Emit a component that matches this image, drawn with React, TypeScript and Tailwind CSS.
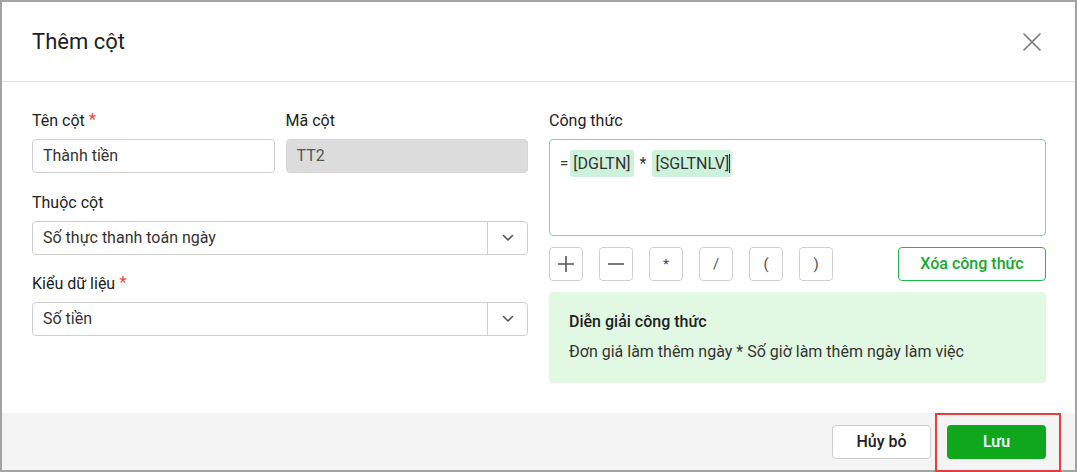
import React from 'react';

const font = { fontFamily: 'Roboto, "Noto Sans", Arial, sans-serif' };

function Label({ text, required }: { text: string; required?: boolean }) {
    return (
        <div className="h-5 leading-5 text-[16px] text-[#212121] mb-2 flex items-start">
            <span>{text}</span>
            {required && <span className="text-[#ef4444] ml-1 text-[17px] leading-4">*</span>}
        </div>
    );
}

function Chevron() {
    return (
        <svg width="12" height="8" viewBox="0 0 12 8" fill="none">
            <path d="M1.5 1.5L6 6L10.5 1.5" stroke="#555" strokeWidth="1.6" strokeLinecap="round" strokeLinejoin="round" />
        </svg>
    );
}

function Select({ value }: { value: string }) {
    return (
        <div className="h-[34px] flex border border-[#cfcfcf] rounded-[4px] bg-white">
            <div className="flex-1 flex items-center pl-[10px] text-[16px] text-[#333]">{value}</div>
            <div className="w-10 border-l border-[#cfcfcf] flex items-center justify-center">
                <Chevron />
            </div>
        </div>
    );
}

function OpButton({ children }: { children: React.ReactNode }) {
    return (
        <button className="w-[34px] h-[34px] border border-[#cfcfcf] rounded-[4px] bg-white flex items-center justify-center text-[#555] text-[15px]">
            {children}
        </button>
    );
}

export default function App() {
    return (
        <div style={font} className="relative w-[1077px] h-[472px] border-2 border-[#a3a3a3] bg-white flex flex-col">
            {/* header */}
            <div className="h-[80px] shrink-0 flex items-center justify-between pl-[30px] pr-[33px] border-b border-[#e0e0e0]">
                <h1 className="text-[22px] text-[#212121] font-normal">Thêm cột</h1>
                <svg width="20" height="20" viewBox="0 0 20 20" fill="none">
                    <path d="M2 2L18 18M18 2L2 18" stroke="#757575" strokeWidth="1.6" strokeLinecap="round" />
                </svg>
            </div>

            {/* body */}
            <div className="flex-1 grid grid-cols-[496px_497px] gap-[21px] pl-[30px] pt-[29px]">
                <div className="flex flex-col">
                    <div className="grid grid-cols-2 gap-[11px]">
                        <div>
                            <Label text="Tên cột" required />
                            <div className="h-[34px] border border-[#cfcfcf] rounded-[4px] flex items-center pl-[10px] text-[16px] text-[#333]">
                                Thành tiền
                            </div>
                        </div>
                        <div>
                            <Label text="Mã cột" />
                            <div className="h-[34px] border border-[#d6d6d6] bg-[#dcdcdc] rounded-[4px] flex items-center pl-[10px] text-[16px] text-[#555]">
                                TT2
                            </div>
                        </div>
                    </div>
                    <div className="mt-5">
                        <Label text="Thuộc cột" />
                        <Select value="Số thực thanh toán ngày" />
                    </div>
                    <div className="mt-[19px]">
                        <Label text="Kiểu dữ liệu" required />
                        <Select value="Số tiền" />
                    </div>
                </div>

                <div className="flex flex-col">
                    <Label text="Công thức" />
                    <div className="h-[97px] border border-[#7ad7a0] rounded-[4px] px-[10px] pt-[10px]">
                        <div className="flex items-center text-[16px] text-[#333]">
                            <span className="mr-[2px] text-[15px]">=</span>
                            <span className="bg-[#ccf2dc] rounded-[3px] px-[3px] h-[27px] leading-[27px]">[DGLTN]</span>
                            <span className="mx-[6px]">*</span>
                            <span className="bg-[#ccf2dc] rounded-[3px] pl-[3px] pr-[2px] h-[27px] leading-[27px] flex items-center">
                                [SGLTNLV]<span className="w-px h-[19px] bg-[#222]" />
                            </span>
                        </div>
                    </div>

                    <div className="mt-[11px] flex items-center">
                        <div className="flex gap-4">
                            <OpButton>
                                <svg width="18" height="18" viewBox="0 0 18 18"><path d="M9 1V17M1 9H17" stroke="#555" strokeWidth="1.6" /></svg>
                            </OpButton>
                            <OpButton>
                                <svg width="16" height="4" viewBox="0 0 16 4"><path d="M0 2H16" stroke="#555" strokeWidth="1.6" /></svg>
                            </OpButton>
                            <OpButton><span className="text-[13px] font-bold">*</span></OpButton>
                            <OpButton>/</OpButton>
                            <OpButton>(</OpButton>
                            <OpButton>)</OpButton>
                        </div>
                        <button className="ml-auto w-[148px] h-[34px] border border-[#1db845] rounded-[4px] text-[#16a831] text-[16px] font-medium">
                            Xóa công thức
                        </button>
                    </div>

                    <div className="mt-[11px] h-[91px] bg-[#e1f9e3] rounded-[4px] pl-5 pt-[20px]">
                        <div className="text-[16px] font-medium text-[#212121] leading-5">Diễn giải công thức</div>
                        <div className="mt-[10px] text-[16px] text-[#333] leading-5">
                            Đơn giá làm thêm ngày * Số giờ làm thêm ngày làm việc
                        </div>
                    </div>
                </div>
            </div>

            {/* footer */}
            <div className="h-[57px] shrink-0 bg-[#f4f4f4] flex items-center justify-end gap-4 pr-[29px]">
                <button className="w-[99px] h-[34px] bg-white border border-[#cfcfcf] rounded-[4px] text-[16px] text-[#212121] font-medium">
                    Hủy bỏ
                </button>
                <button className="w-[99px] h-[34px] bg-[#0fa81c] rounded-[4px] text-[16px] text-white font-medium">
                    Lưu
                </button>
            </div>

            <div className="absolute left-[933px] top-[411px] w-[126px] h-[59px] border-2 border-[#e53e3e] pointer-events-none" />
        </div>
    );
}
